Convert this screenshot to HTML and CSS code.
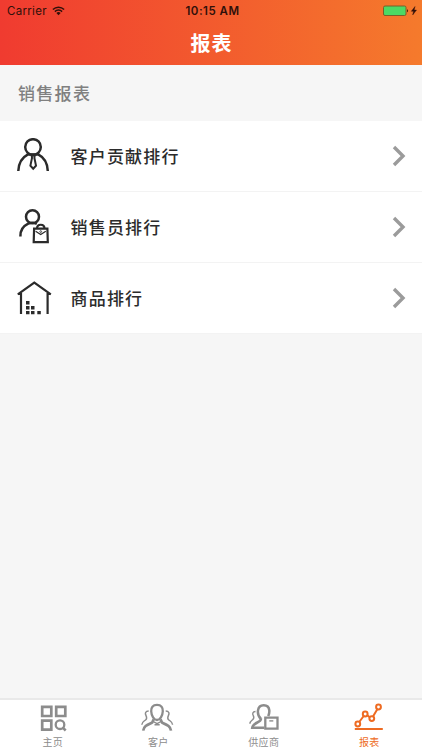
FILE: index.html
```
<!DOCTYPE html>
<html lang="zh-CN">
<head>
  <meta charset="UTF-8">
  <meta name="viewport" content="width=device-width, initial-scale=1.0">
  <title>报表</title>
  <link rel="stylesheet" href="styles.css">
</head>
<body>
  <header class="header">
    <div class="status-bar">
      <div class="status-left">
        <span class="carrier">Carrier</span>
        <svg class="wifi" width="13" height="10" viewBox="0 0 13 10">
          <path d="M.9 3.500a8 8 0 0 1 11.200 0M2.900 5.600a5.100 5.100 0 0 1 7.200 0" fill="none" stroke="#30100a" stroke-width="1.500"/>
          <path d="M4.400 7.100a3 3 0 0 1 4.200 0L6.500 9.300z" fill="#30100a"/>
        </svg>
      </div>
      <span class="time">10:15 AM</span>
      <div class="status-right">
        <svg width="35" height="12" viewBox="0 0 35 12">
          <rect x=".5" y="1" width="22.500" height="9.500" rx="1.500" fill="#4cd964" stroke="#76602a"/>
          <path d="M24 4.200c1.400.2 1.400 2.800 0 3z" fill="#50200c"/>
          <path d="M32 1.500L28.300 6.300h2.200L29.700 10l3.800-4.900h-2.300z" fill="#30100a" stroke="#30100a" stroke-width=".4"/>
        </svg>
      </div>
    </div>
    <h1>报表</h1>
  </header>

  <main class="content">
    <h2 class="section-title">销售报表</h2>
    <ul class="report-list">
      <li class="report-item">
        <svg class="item-icon" width="36" height="36" viewBox="0 0 36 36">
          <circle cx="17" cy="9" r="7.800"/>
          <path d="M2.300 33C2.600 25.500 6 19.500 12 16.400h10.200c6 3.100 9.300 9.100 9.600 16.600"/>
          <path d="M15.700 17.500h3l-.3 2.500 1.600 7.600-2.800 3.100-2.800-3.100 1.600-7.600z" stroke-width="2"/>
        </svg>
        <span class="item-name">客户贡献排行</span>
        <svg class="arrow" width="14" height="22" viewBox="0 0 14 22"><path d="M2 2l9 9-9 9"/></svg>
      </li>
      <li class="report-item">
        <svg class="item-icon" width="36" height="36" viewBox="0 0 36 36">
          <circle cx="16.500" cy="7.800" r="6.500"/>
          <path d="M4.400 27.500c-.2-5.500 2.600-10.300 7.800-12.800 2.800-1.100 6.300-1 8.600.1"/>
          <path d="M18.100 19.700h13.300l.4 13.400H17.700zM21 19.500c0-5 7.500-5 7.500 0" stroke-width="2.200"/>
          <path d="M19.600 22.200l5.100 3.300 5.100-3.300" stroke-width="1.200"/>
          <circle cx="24.700" cy="22.600" r=".9" stroke-width=".8"/>
        </svg>
        <span class="item-name">销售员排行</span>
        <svg class="arrow" width="14" height="22" viewBox="0 0 14 22"><path d="M2 2l9 9-9 9"/></svg>
      </li>
      <li class="report-item">
        <svg class="item-icon" width="36" height="36" viewBox="0 0 36 36">
          <path d="M1.800 14.300L18.300 2.700l16.500 11.600M1.800 14H5v20M34.800 14h-3.200v20" stroke-width="2.200"/>
          <path class="bricks" d="M10 21h3.500v3.500H10zM10 26h3.500v3.500H10zM15 26h3.500v3.500H15zM10 31h3.500v3.300H10zM15 31h3.500v3.300H15zM21.300 31h3.500v3.300h-3.500z"/>
        </svg>
        <span class="item-name">商品排行</span>
        <svg class="arrow" width="14" height="22" viewBox="0 0 14 22"><path d="M2 2l9 9-9 9"/></svg>
      </li>
    </ul>
  </main>

  <nav class="tab-bar">
    <a class="tab">
      <svg width="36" height="32" viewBox="0 0 36 32">
        <path d="M7.200 4.900h9.100v9.100H7.200zM21.200 4.900h9.100v9.100h-9.100zM7.200 18.600h9.100v9.100H7.200z" stroke-width="2.700"/>
        <circle cx="25" cy="22.700" r="4.300" stroke-width="2.300"/>
        <path d="M27.500 25.300l3.200 3.200" stroke-width="2.500"/>
      </svg>
      <span>主页</span>
    </a>
    <a class="tab">
      <svg width="36" height="32" viewBox="0 0 36 32">
        <path d="M17 2.900c-4.300 0-6 2.600-5.800 6.300.2 4.500 2.800 8.800 5.800 8.800s5.600-4.300 5.800-8.800c.2-3.700-1.500-6.300-5.800-6.300z" stroke-width="2.300"/>
        <path d="M3.200 28.700c.5-4.500 3.700-5.700 9-8.100l1.500-3.300M31 28.700c-.5-4.500-3.700-5.700-9-8.100l-1.500-3.300" stroke-width="2.700"/>
        <path d="M13.200 19.500l3.900 2.200 3.900-2.200M14.500 22.700h5.200" stroke-width="1.400"/>
        <path d="M8.700 9C5.300 9 4.800 11.500 6 13.500c.8 1.800 1.200 3-.2 4.200-1.800 1.600-3.700 2-4 5M25.700 9c3.400 0 3.900 2.500 2.700 4.500-.8 1.800-1.200 3 .2 4.200 1.800 1.600 3.700 2 4 5" stroke-width="1.500"/>
      </svg>
      <span>客户</span>
    </a>
    <a class="tab">
      <svg width="36" height="32" viewBox="0 0 36 32">
        <path d="M15 17c-2.700-2.500-3.400-5.700-3-8.700.5-3.300 2.600-5 5.700-5s5.300 1.700 5.600 5c.2 2-.2 3.700-1 5.800M15 16.500c.4 4.500-8 3.400-8.800 9.300h12" stroke-width="2.500"/>
        <path d="M19.300 15.600h12.200v11H19.300z" stroke-width="2.300"/>
        <path d="M23.300 18.900h4" stroke-width="1.400"/>
        <path d="M9.500 9.500c-3 .3-3.300 2.300-2.200 4.100.9 1.700.8 2.900-.7 4.100-1.400 1.200-2.500 1.900-2.700 4" stroke-width="1.400"/>
      </svg>
      <span>供应商</span>
    </a>
    <a class="tab active">
      <svg width="36" height="32" viewBox="0 0 36 32">
        <path d="M8.200 20L12.700 14M16.200 13.200l2.500 2M22 14.500L26.300 7.200M3.800 27h28"/>
        <circle cx="6.800" cy="22" r="2.400"/>
        <circle cx="14.200" cy="12" r="2.400"/>
        <circle cx="20.800" cy="16.600" r="2.400"/>
        <circle cx="27.500" cy="5" r="2.400"/>
      </svg>
      <span>报表</span>
    </a>
  </nav>
</body>
</html>
```
FILE: styles.css
```
* {
  box-sizing: border-box;
}
body {
  margin: 0;
  height: 750px;
  display: flex;
  flex-direction: column;
  background-color: #f6f6f6;
  font-family: Inter, "Noto Sans CJK SC", sans-serif;
  overflow: hidden;
}
.header {
  height: 65px;
  background: linear-gradient(to right, #f03b30, #f57a2c);
}
.status-bar {
  display: grid;
  grid-template-columns: 1fr auto 1fr;
  align-items: center;
  height: 22px;
  padding: 0 4px 0 7px;
  font-size: 11.5px;
  color: #30100a;
}
.status-left {
  display: flex;
  align-items: center;
  gap: 5px;
}
.carrier {
  letter-spacing: 0.3px;
}
.time {
  font-weight: 600;
  letter-spacing: 0.5px;
}
.status-right {
  display: flex;
  justify-content: flex-end;
}
.header h1 {
  margin: 0;
  padding-left: 1px;
  line-height: 44px;
  font-size: 20px;
  font-weight: 700;
  letter-spacing: 1px;
  text-align: center;
  color: #fff;
}
.content {
  flex: 1;
}
.section-title {
  margin: 0;
  height: 56px;
  padding-left: 18px;
  line-height: 58px;
  font-size: 17px;
  font-weight: 500;
  letter-spacing: 1.3px;
  color: #808080;
}
.report-list {
  margin: 0;
  padding: 0;
  list-style: none;
}
.report-item {
  display: flex;
  align-items: center;
  height: 71px;
  padding: 0 16px;
  background-color: #fff;
  border-bottom: 1px solid #f3f3f3;
}
.item-icon {
  fill: none;
  stroke: #2b2b2b;
  stroke-width: 2.5;
}
.bricks {
  fill: #2b2b2b;
  stroke: none;
}
.item-name {
  flex: 1;
  margin-left: 18.5px;
  padding-bottom: 2px;
  font-size: 17px;
  font-weight: 500;
  letter-spacing: 1.2px;
  color: #2b2b2b;
}
.arrow {
  fill: none;
  stroke: #9b9b9b;
  stroke-width: 3.4;
}
.tab-bar {
  display: flex;
  height: 52px;
  background-color: #fff;
  border-top: 2px solid #e9e9e9;
}
.tab {
  flex: 1;
  display: flex;
  flex-direction: column;
  align-items: center;
  padding-top: 2px;
  font-size: 10px;
  line-height: 16px;
  letter-spacing: 0.3px;
  color: #8c8c8c;
}
.tab svg {
  fill: none;
  stroke: #8c8c8c;
  stroke-width: 2;
}
.tab.active {
  color: #ee6b22;
}
.tab.active svg {
  stroke: #ee6b22;
}
```
